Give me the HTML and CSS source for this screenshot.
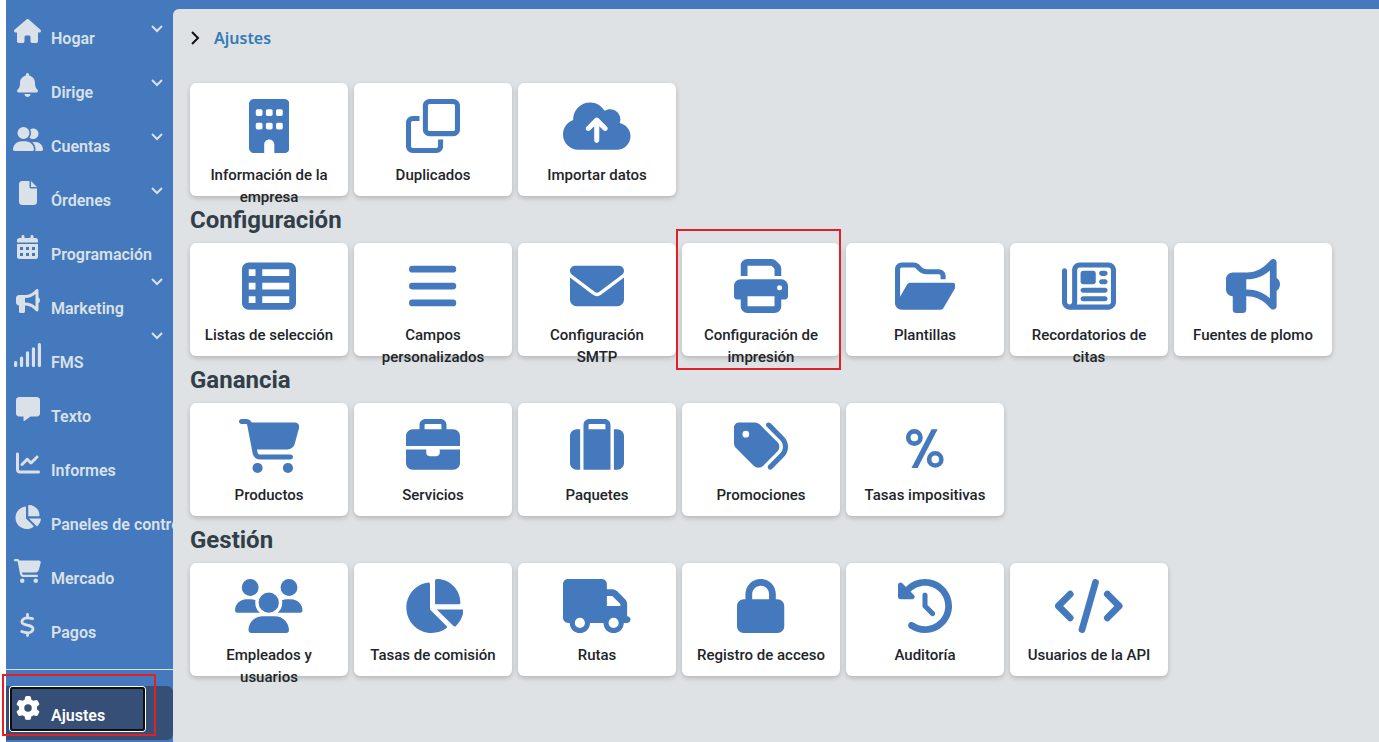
FILE: index.html
```html
<!DOCTYPE html>
<html lang="es">
<head>
    <meta charset="UTF-8">
    <meta name="viewport" content="width=device-width, initial-scale=1.0">
    <title>Ajustes</title>
    <link rel="stylesheet" href="styles.css">
</head>
<body>
    <div class="app">
        <!-- Sidebar -->
        <nav class="sidebar">
            <ul class="nav-list">
                <li><a href="#" class="nav-item">
                    <span class="nav-icon"><svg viewBox="0 0 576 512"><path d="M575.8 255.5c0 18-15 32.1-32 32.1h-32l.7 160.2V472c0 22.1-17.9 40-40 40H392c-22.1 0-40-17.9-40-40V384c0-17.7-14.3-32-32-32H256c-17.7 0-32 14.3-32 32v88c0 22.1-17.9 40-40 40H104c-22.1 0-40-17.9-40-40V287.6H32c-18 0-32-14-32-32.1c0-9 3-17 10-24L266.4 8c7-7 15-8 22-8s15 2 21 7L564.8 231.5c8 7 12 15 11 24z"/></svg></span>
                    <span class="nav-label">Hogar</span>
                    <svg class="chevron" viewBox="0 0 12 8"><path d="M1 1l5 5 5-5"/></svg>
                </a></li>
                <li><a href="#" class="nav-item">
                    <span class="nav-icon"><svg viewBox="0 0 448 512"><path d="M224 0c-17.7 0-32 14.3-32 32V51.2C119 66 64 130.6 64 208v18.8c0 47-17.3 92.4-48.5 127.6l-7.4 8.3c-8.4 9.4-10.4 22.9-5.3 34.4S19.4 416 32 416H416c12.6 0 24-7.4 29.2-18.9s3.1-25-5.3-34.4l-7.4-8.3C401.3 319.2 384 273.9 384 226.8V208c0-77.4-55-142-128-156.8V32c0-17.7-14.3-32-32-32zm45.3 493.3c12-12 18.7-28.3 18.7-45.3H160c0 17 6.7 33.3 18.7 45.3s28.3 18.7 45.3 18.7s33.3-6.7 45.3-18.7z"/></svg></span>
                    <span class="nav-label">Dirige</span>
                    <svg class="chevron" viewBox="0 0 12 8"><path d="M1 1l5 5 5-5"/></svg>
                </a></li>
                <li><a href="#" class="nav-item">
                    <span class="nav-icon"><svg viewBox="0 0 640 512"><path d="M96 128a128 128 0 1 1 256 0A128 128 0 1 1 96 128zM0 482.3C0 383.8 79.8 304 178.3 304h91.4C368.2 304 448 383.8 448 482.3c0 16.4-13.3 29.7-29.7 29.7H29.7C13.3 512 0 498.7 0 482.3zM609.3 512H471.4c5.4-9.4 8.6-20.3 8.6-32v-8c0-60.7-27.1-115.2-69.8-151.8c2.4-.1 4.7-.2 7.1-.2h61.4C567.8 320 640 392.2 640 481.3c0 17-13.8 30.7-30.7 30.7zM432 256c-31 0-59-12.6-79.3-32.9C372.4 196.5 384 163.6 384 128c0-26.8-6.6-52.1-18.3-74.3C384.3 40.1 407.2 32 432 32c61.9 0 112 50.1 112 112s-50.1 112-112 112z"/></svg></span>
                    <span class="nav-label">Cuentas</span>
                    <svg class="chevron" viewBox="0 0 12 8"><path d="M1 1l5 5 5-5"/></svg>
                </a></li>
                <li><a href="#" class="nav-item">
                    <span class="nav-icon"><svg viewBox="0 0 384 512"><path d="M0 64C0 28.7 28.7 0 64 0H224V128c0 17.7 14.3 32 32 32H384V448c0 35.3-28.7 64-64 64H64c-35.3 0-64-28.7-64-64V64zm384 64H256V0L384 128z"/></svg></span>
                    <span class="nav-label">Órdenes</span>
                    <svg class="chevron" viewBox="0 0 12 8"><path d="M1 1l5 5 5-5"/></svg>
                </a></li>
                <li><a href="#" class="nav-item">
                    <span class="nav-icon"><svg viewBox="0 0 448 512"><path fill-rule="evenodd" d="M128 0c17.7 0 32 14.3 32 32V64H288V32c0-17.7 14.3-32 32-32s32 14.3 32 32V64h48c26.5 0 48 21.5 48 48v48H0V112C0 85.5 21.5 64 48 64H96V32c0-17.7 14.3-32 32-32zM0 192H448V464c0 26.5-21.5 48-48 48H48c-26.5 0-48-21.5-48-48V192zM64 256v64h64v-64zM192 256v64h64v-64zM320 256v64h64v-64zM64 384v64h64v-64zM192 384v64h64v-64zM320 384v64h64v-64z"/></svg></span>
                    <span class="nav-label">Programación</span>
                </a></li>
                <li><a href="#" class="nav-item">
                    <span class="nav-icon"><svg viewBox="0 0 512 512"><path d="M480 32c0-12.9-7.8-24.6-19.8-29.6s-25.7-2.2-34.9 6.9L381.7 53c-48 48-113.1 75-181 75H64c-35.3 0-64 28.7-64 64v96c0 35.3 28.7 64 64 64V480c0 17.7 14.3 32 32 32h64c17.7 0 32-14.3 32-32V352h8.7c67.9 0 133 27 181 75l43.6 43.6c9.2 9.2 22.9 11.9 34.9 6.9s19.8-16.6 19.8-29.6V300.4c18.6-8.8 32-32.5 32-60.4s-13.4-51.6-32-60.4V32zm-64 76.7V371.3C357.2 317.8 280.5 288 200.7 288H192V192h8.7c79.8 0 156.5-29.8 215.3-83.3z"/></svg></span>
                    <span class="nav-label">Marketing</span>
                    <svg class="chevron chevron-top" viewBox="0 0 12 8"><path d="M1 1l5 5 5-5"/></svg>
                </a></li>
                <li><a href="#" class="nav-item">
                    <span class="nav-icon"><svg viewBox="0 0 576 512"><rect x="0" y="384" width="68" height="128" rx="32"/><rect x="127" y="288" width="68" height="224" rx="32"/><rect x="254" y="176" width="68" height="336" rx="32"/><rect x="381" y="88" width="68" height="424" rx="32"/><rect x="508" y="0" width="68" height="512" rx="32"/></svg></span>
                    <span class="nav-label">FMS</span>
                    <svg class="chevron chevron-top" viewBox="0 0 12 8"><path d="M1 1l5 5 5-5"/></svg>
                </a></li>
                <li><a href="#" class="nav-item">
                    <span class="nav-icon"><svg viewBox="0 0 512 512"><path d="M64 0C28.7 0 0 28.7 0 64V352c0 35.3 28.7 64 64 64h96v80c0 6.1 3.4 11.6 8.8 14.3s11.9 2.1 16.8-1.5L309.3 416H448c35.3 0 64-28.7 64-64V64c0-35.3-28.7-64-64-64H64z"/></svg></span>
                    <span class="nav-label">Texto</span>
                </a></li>
                <li><a href="#" class="nav-item">
                    <span class="nav-icon"><svg viewBox="0 0 512 512"><path d="M64 64c0-17.7-14.3-32-32-32S0 46.3 0 64V400c0 44.2 35.8 80 80 80H480c17.7 0 32-14.3 32-32s-14.3-32-32-32H80c-8.8 0-16-7.2-16-16V64zm406.6 86.6c12.5-12.5 12.5-32.8 0-45.3s-32.8-12.5-45.3 0L320 210.7l-57.4-57.4c-12.5-12.5-32.8-12.5-45.3 0l-112 112c-12.5 12.5-12.5 32.8 0 45.3s32.8 12.5 45.3 0L240 221.3l57.4 57.4c12.5 12.5 32.8 12.5 45.3 0l128-128z"/></svg></span>
                    <span class="nav-label">Informes</span>
                </a></li>
                <li><a href="#" class="nav-item">
                    <span class="nav-icon"><svg viewBox="0 0 576 512"><path d="M304 240V16.6c0-9 7-16.6 16-16.6C443.7 0 544 100.3 544 224c0 9-7.6 16-16.6 16H304zM32 272C32 150.7 122.1 50.3 239 34.3c9.2-1.3 17 6.1 17 15.4V288L412.5 444.5c6.7 6.7 6.2 17.7-1.5 23.1C371.8 495.6 323.8 512 272 512C139.5 512 32 404.6 32 272zm526.4 16c9.3 0 16.6 7.8 15.4 17c-7.7 55.9-34.6 105.6-73.9 142.3c-6 5.6-15.4 5.2-21.2-.7L320 288H558.4z"/></svg></span>
                    <span class="nav-label">Paneles de control</span>
                </a></li>
                <li><a href="#" class="nav-item">
                    <span class="nav-icon"><svg viewBox="0 0 576 512"><path d="M0 24C0 10.7 10.7 0 24 0H69.5c22 0 41.5 12.8 50.6 32h411c26.3 0 45.5 25 38.6 50.4l-41 152.3c-8.5 31.4-37 53.3-69.5 53.3H170.7l5.4 28.5c2.2 11.3 12.1 19.5 23.6 19.5H488c13.3 0 24 10.7 24 24s-10.7 24-24 24H199.7c-34.6 0-64.3-24.6-70.7-58.5L77.4 54.5c-.7-3.8-4-6.5-7.9-6.5H24C10.7 48 0 37.3 0 24zM128 464a48 48 0 1 1 96 0 48 48 0 1 1 -96 0zm336-48a48 48 0 1 1 0 96 48 48 0 1 1 0-96z"/></svg></span>
                    <span class="nav-label">Mercado</span>
                </a></li>
                <li><a href="#" class="nav-item">
                    <span class="nav-icon"><svg class="line-icon" viewBox="0 0 320 512"><path d="M160 32v60M160 420v60M268 122c-62-16-106-26-152-12c-62 18-88 64-66 104c34 56 186 38 220 100c20 40-6 86-60 102c-56 14-116 2-172-20"/></svg></span>
                    <span class="nav-label">Pagos</span>
                </a></li>
            </ul>
            <div class="nav-footer">
                <div class="nav-active">
                    <a href="#" class="nav-item nav-focus">
                        <span class="nav-icon"><svg viewBox="0 0 512 512"><path d="M495.9 166.6c3.2 8.7 .5 18.4-6.4 24.6l-43.3 39.4c1.1 8.3 1.7 16.8 1.7 25.4s-.6 17.1-1.7 25.4l43.3 39.4c6.9 6.2 9.6 15.9 6.4 24.6c-4.4 11.9-9.7 23.3-15.8 34.3l-4.7 8.1c-6.6 11-14 21.4-22.1 31.2c-5.9 7.2-15.7 9.6-24.5 6.8l-55.7-17.7c-13.4 10.3-28.2 18.9-44 25.4l-12.5 57.1c-2 9.1-9 16.3-18.2 17.8c-13.8 2.3-28 3.5-42.5 3.5s-28.7-1.2-42.5-3.5c-9.2-1.5-16.2-8.7-18.2-17.8l-12.5-57.1c-15.8-6.5-30.6-15.1-44-25.4L83.1 425.9c-8.8 2.8-18.6 .3-24.5-6.8c-8.1-9.8-15.5-20.2-22.1-31.2l-4.7-8.1c-6.1-11-11.4-22.4-15.8-34.3c-3.2-8.7-.5-18.4 6.4-24.6l43.3-39.4C64.6 273.1 64 264.6 64 256s.6-17.1 1.7-25.4L22.4 191.2c-6.9-6.2-9.6-15.9-6.4-24.6c4.4-11.9 9.7-23.3 15.8-34.3l4.7-8.1c6.6-11 14-21.4 22.1-31.2c5.9-7.2 15.7-9.6 24.5-6.8l55.7 17.7c13.4-10.3 28.2-18.9 44-25.4l12.5-57.1c2-9.1 9-16.3 18.2-17.8C227.3 1.2 241.5 0 256 0s28.7 1.2 42.5 3.5c9.2 1.5 16.2 8.7 18.2 17.8l12.5 57.1c15.8 6.5 30.6 15.1 44 25.4l55.7-17.7c8.8-2.8 18.6-.3 24.5 6.8c8.1 9.8 15.5 20.2 22.1 31.2l4.7 8.1c6.1 11 11.4 22.4 15.8 34.3zM256 336a80 80 0 1 0 0-160 80 80 0 1 0 0 160z"/></svg></span>
                        <span class="nav-label">Ajustes</span>
                    </a>
                </div>
            </div>
        </nav>

        <!-- Settings page -->
        <main class="content">
            <div class="breadcrumb">
                <svg class="breadcrumb-arrow" viewBox="0 0 10 14"><path d="M2 1l6 6-6 6"/></svg>
                <a href="#">Ajustes</a>
            </div>

            <section class="card-grid">
                <a href="#" class="card">
                    <svg viewBox="0 0 384 512"><path fill-rule="evenodd" d="M48 0C21.5 0 0 21.5 0 48V464c0 26.5 21.5 48 48 48h96V432c0-26.5 21.5-48 48-48s48 21.5 48 48v80h96c26.5 0 48-21.5 48-48V48c0-26.5-21.5-48-48-48H48zM80 96h32q16 0 16 16v32q0 16-16 16H80q-16 0-16-16v-32q0-16 16-16zM176 96h32q16 0 16 16v32q0 16-16 16h-32q-16 0-16-16v-32q0-16 16-16zM272 96h32q16 0 16 16v32q0 16-16 16h-32q-16 0-16-16v-32q0-16 16-16zM80 224h32q16 0 16 16v32q0 16-16 16H80q-16 0-16-16v-32q0-16 16-16zM176 224h32q16 0 16 16v32q0 16-16 16h-32q-16 0-16-16v-32q0-16 16-16zM272 224h32q16 0 16 16v32q0 16-16 16h-32q-16 0-16-16v-32q0-16 16-16z"/></svg>
                    <span class="card-label">Información de la empresa</span>
                </a>
                <a href="#" class="card">
                    <svg viewBox="0 0 512 512"><path fill-rule="evenodd" d="M224 0H448c35.3 0 64 28.7 64 64V288c0 35.3-28.7 64-64 64H224c-35.3 0-64-28.7-64-64V64c0-35.3 28.7-64 64-64zm0 48c-8.8 0-16 7.2-16 16V288c0 8.8 7.2 16 16 16H448c8.8 0 16-7.2 16-16V64c0-8.8-7.2-16-16-16H224zM64 160c-35.3 0-64 28.7-64 64V448c0 35.3 28.7 64 64 64H288c35.3 0 64-28.7 64-64V384H304v64c0 8.8-7.2 16-16 16H64c-8.8 0-16-7.2-16-16V224c0-8.8 7.2-16 16-16h64V160H64z"/></svg>
                    <span class="card-label">Duplicados</span>
                </a>
                <a href="#" class="card">
                    <svg viewBox="0 0 640 512"><path d="M144 480C64.5 480 0 415.5 0 336c0-62.8 40.2-116.2 96.2-135.9c-.1-2.7-.2-5.4-.2-8.1c0-88.4 71.6-160 160-160c59.3 0 111 32.2 138.7 80.2C409.9 102 428.3 96 448 96c53 0 96 43 96 96c0 12.2-2.3 23.8-6.4 34.6C596 238.4 640 290.1 640 352c0 70.7-57.3 128-128 128H144zm79-217c-9.4 9.4-9.4 24.6 0 33.9s24.6 9.4 33.9 0l39-39V392c0 13.3 10.7 24 24 24s24-10.7 24-24V257.9l39 39c9.4 9.4 24.6 9.4 33.9 0s9.4-24.6 0-33.9l-80-80c-9.4-9.4-24.6-9.4-33.9 0l-80 80z"/></svg>
                    <span class="card-label">Importar datos</span>
                </a>
            </section>

            <h2>Configuración</h2>
            <section class="card-grid">
                <a href="#" class="card">
                    <svg viewBox="0 0 512 512"><path fill-rule="evenodd" d="M64 32H448c35.3 0 64 28.7 64 64V416c0 35.3-28.7 64-64 64H64c-35.3 0-64-28.7-64-64V96c0-35.3 28.7-64 64-64zM64 96v64h64V96zM192 96v64H448V96zM64 224v64h64v-64zM192 224v64H448v-64zM64 352v64h64v-64zM192 352v64H448v-64z"/></svg>
                    <span class="card-label">Listas de selección</span>
                </a>
                <a href="#" class="card">
                    <svg class="line-icon" viewBox="0 0 448 512"><path d="M32 96H416M32 256H416M32 416H416"/></svg>
                    <span class="card-label">Campos personalizados</span>
                </a>
                <a href="#" class="card">
                    <svg viewBox="0 0 512 512"><path d="M48 64C21.5 64 0 85.5 0 112c0 15.1 7.1 29.3 19.2 38.4L236.8 313.6c11.4 8.5 27 8.5 38.4 0L492.8 150.4c12.1-9.1 19.2-23.3 19.2-38.4c0-26.5-21.5-48-48-48H48zM0 176V384c0 35.3 28.7 64 64 64H448c35.3 0 64-28.7 64-64V176L294.4 339.2c-22.8 17.1-54 17.1-76.8 0L0 176z"/></svg>
                    <span class="card-label">Configuración SMTP</span>
                </a>
                <a href="#" class="card card-marked">
                    <svg viewBox="0 0 512 512"><path fill-rule="evenodd" d="M128 0C92.7 0 64 28.7 64 64v96h64V64H354.7L384 93.3V160h64V93.3c0-17-6.7-33.3-18.7-45.3L400 18.7C388 6.7 371.7 0 354.7 0H128zM384 352v96H128V352H384zm64 32h32c17.7 0 32-14.3 32-32V256c0-35.3-28.7-64-64-64H64c-35.3 0-64 28.7-64 64v96c0 17.7 14.3 32 32 32H64v64c0 35.3 28.7 64 64 64H384c35.3 0 64-28.7 64-64V384zM432 248a24 24 0 1 1 0 48 24 24 0 1 1 0-48z"/></svg>
                    <span class="card-label">Configuración de impresión</span>
                </a>
                <a href="#" class="card">
                    <svg viewBox="0 0 576 512"><path d="M384 480h48c11.4 0 21.9-6 27.6-15.9l112-192c5.8-9.9 5.8-22.1 .1-32.1S555.5 224 544 224H144c-11.4 0-21.9 6-27.6 15.9L48 357.1V96c0-8.8 7.2-16 16-16H181.5c4.2 0 8.3 1.7 11.3 4.7l26.5 26.5c21 21 49.5 32.8 79.2 32.8H416c8.8 0 16 7.2 16 16v32h48V160c0-35.3-28.7-64-64-64H298.5c-17 0-33.3-6.7-45.3-18.7L226.7 50.7c-12-12-28.3-18.7-45.3-18.7H64C28.7 32 0 60.7 0 96V416c0 35.3 28.7 64 64 64H384z"/></svg>
                    <span class="card-label">Plantillas</span>
                </a>
                <a href="#" class="card">
                    <svg viewBox="0 0 512 512"><path fill-rule="evenodd" d="M168 80c-13.3 0-24 10.7-24 24V408c0 8.4-1.4 16.5-4.1 24H440c13.3 0 24-10.7 24-24V104c0-13.3-10.7-24-24-24H168zM72 480c-39.8 0-72-32.2-72-72V112C0 98.7 10.7 88 24 88s24 10.7 24 24V408c0 13.3 10.7 24 24 24s24-10.7 24-24V104c0-39.8 32.2-72 72-72H440c39.8 0 72 32.2 72 72V408c0 39.8-32.2 72-72 72H72zM176 136c0-13.3 10.7-24 24-24h96c13.3 0 24 10.7 24 24v80c0 13.3-10.7 24-24 24H200c-13.3 0-24-10.7-24-24V136zm200-24h32c13.3 0 24 10.7 24 24s-10.7 24-24 24H376c-13.3 0-24-10.7-24-24s10.7-24 24-24zm0 80h32c13.3 0 24 10.7 24 24s-10.7 24-24 24H376c-13.3 0-24-10.7-24-24s10.7-24 24-24zM200 272H408c13.3 0 24 10.7 24 24s-10.7 24-24 24H200c-13.3 0-24-10.7-24-24s10.7-24 24-24zm0 80H408c13.3 0 24 10.7 24 24s-10.7 24-24 24H200c-13.3 0-24-10.7-24-24s10.7-24 24-24z"/></svg>
                    <span class="card-label">Recordatorios de citas</span>
                </a>
                <a href="#" class="card">
                    <svg viewBox="0 0 512 512"><path d="M480 32c0-12.9-7.8-24.6-19.8-29.6s-25.7-2.2-34.9 6.9L381.7 53c-48 48-113.1 75-181 75H64c-35.3 0-64 28.7-64 64v96c0 35.3 28.7 64 64 64V480c0 17.7 14.3 32 32 32h64c17.7 0 32-14.3 32-32V352h8.7c67.9 0 133 27 181 75l43.6 43.6c9.2 9.2 22.9 11.9 34.9 6.9s19.8-16.6 19.8-29.6V300.4c18.6-8.8 32-32.5 32-60.4s-13.4-51.6-32-60.4V32zm-64 76.7V371.3C357.2 317.8 280.5 288 200.7 288H192V192h8.7c79.8 0 156.5-29.8 215.3-83.3z"/></svg>
                    <span class="card-label">Fuentes de plomo</span>
                </a>
            </section>

            <h2>Ganancia</h2>
            <section class="card-grid">
                <a href="#" class="card">
                    <svg viewBox="0 0 576 512"><path d="M0 24C0 10.7 10.7 0 24 0H69.5c22 0 41.5 12.8 50.6 32h411c26.3 0 45.5 25 38.6 50.4l-41 152.3c-8.5 31.4-37 53.3-69.5 53.3H170.7l5.4 28.5c2.2 11.3 12.1 19.5 23.6 19.5H488c13.3 0 24 10.7 24 24s-10.7 24-24 24H199.7c-34.6 0-64.3-24.6-70.7-58.5L77.4 54.5c-.7-3.8-4-6.5-7.9-6.5H24C10.7 48 0 37.3 0 24zM128 464a48 48 0 1 1 96 0 48 48 0 1 1 -96 0zm336-48a48 48 0 1 1 0 96 48 48 0 1 1 0-96z"/></svg>
                    <span class="card-label">Productos</span>
                </a>
                <a href="#" class="card">
                    <svg viewBox="0 0 512 512"><path fill-rule="evenodd" d="M184 48H328c4.4 0 8 3.6 8 8V96H176V56c0-4.4 3.6-8 8-8zm-56 8V96H64C28.7 96 0 124.7 0 160v96H512V160c0-35.3-28.7-64-64-64H384V56c0-30.9-25.1-56-56-56H184c-30.9 0-56 25.1-56 56zM512 288H320v32c0 17.7-14.3 32-32 32H224c-17.7 0-32-14.3-32-32V288H0V416c0 35.3 28.7 64 64 64H448c35.3 0 64-28.7 64-64V288z"/></svg>
                    <span class="card-label">Servicios</span>
                </a>
                <a href="#" class="card">
                    <svg viewBox="0 0 512 512"><path fill-rule="evenodd" d="M176 56V96H336V56c0-4.4-3.6-8-8-8H184c-4.4 0-8 3.6-8 8zM128 96V56c0-30.9 25.1-56 56-56H328c30.9 0 56 25.1 56 56V480H128V96zM64 96H96V480H64c-35.3 0-64-28.7-64-64V160c0-35.3 28.7-64 64-64zM448 480H416V96h32c35.3 0 64 28.7 64 64V416c0 35.3-28.7 64-64 64z"/></svg>
                    <span class="card-label">Paquetes</span>
                </a>
                <a href="#" class="card">
                    <svg viewBox="0 0 512 512"><path d="M345 39.1L472.8 168.4c52.4 53 52.4 138.2 0 191.2L360.8 472.9c-9.3 9.4-24.5 9.5-33.9 .2s-9.5-24.5-.2-33.9L438.6 325.9c33.9-34.3 33.9-89.4 0-123.7L310.9 72.9c-9.3-9.4-9.2-24.6 .2-33.9s24.6-9.2 33.9 .2zM0 229.5V80C0 53.5 21.5 32 48 32H197.5c17 0 33.3 6.7 45.3 18.7l168 168c25 25 25 65.5 0 90.5L277.3 442.7c-25 25-65.5 25-90.5 0l-168-168C6.7 262.7 0 246.5 0 229.5zM144 144a32 32 0 1 0 -64 0 32 32 0 1 0 64 0z"/></svg>
                    <span class="card-label">Promociones</span>
                </a>
                <a href="#" class="card">
                    <svg class="percent-icon" viewBox="0 0 512 512"><circle cx="155" cy="175" r="58"/><circle cx="353" cy="383" r="58"/><path class="slash" d="M318 98h58L186 464h-58z"/></svg>
                    <span class="card-label">Tasas impositivas</span>
                </a>
            </section>

            <h2>Gestión</h2>
            <section class="card-grid">
                <a href="#" class="card">
                    <svg viewBox="0 0 640 512"><path d="M144 0a80 80 0 1 1 0 160A80 80 0 1 1 144 0zM512 0a80 80 0 1 1 0 160A80 80 0 1 1 512 0zM0 298.7C0 239.8 47.8 192 106.7 192h42.7c15.9 0 31 3.5 44.6 9.7c-1.3 7.2-1.9 14.7-1.9 22.3c0 38.2 16.8 72.5 43.3 96H21.3C9.6 320 0 310.4 0 298.7zM404.6 320c26.6-23.5 43.3-57.8 43.3-96c0-7.6-.7-15-1.9-22.3c13.6-6.3 28.7-9.7 44.6-9.7h42.7C592.2 192 640 239.8 640 298.7c0 11.8-9.6 21.3-21.3 21.3H404.6zM224 224a96 96 0 1 1 192 0 96 96 0 1 1 -192 0zM128 485.3C128 411.7 187.7 352 261.3 352H378.7C452.3 352 512 411.7 512 485.3c0 14.7-11.9 26.7-26.7 26.7H154.7c-14.7 0-26.7-11.9-26.7-26.7z"/></svg>
                    <span class="card-label">Empleados y usuarios</span>
                </a>
                <a href="#" class="card">
                    <svg viewBox="0 0 576 512"><path d="M304 240V16.6c0-9 7-16.6 16-16.6C443.7 0 544 100.3 544 224c0 9-7.6 16-16.6 16H304zM32 272C32 150.7 122.1 50.3 239 34.3c9.2-1.3 17 6.1 17 15.4V288L412.5 444.5c6.7 6.7 6.2 17.7-1.5 23.1C371.8 495.6 323.8 512 272 512C139.5 512 32 404.6 32 272zm526.4 16c9.3 0 16.6 7.8 15.4 17c-7.7 55.9-34.6 105.6-73.9 142.3c-6 5.6-15.4 5.2-21.2-.7L320 288H558.4z"/></svg>
                    <span class="card-label">Tasas de comisión</span>
                </a>
                <a href="#" class="card">
                    <svg viewBox="0 0 640 512"><path fill-rule="evenodd" d="M48 0C21.5 0 0 21.5 0 48V368c0 26.5 21.5 48 48 48H64c0 53 43 96 96 96s96-43 96-96H384c0 53 43 96 96 96s96-43 96-96h32c17.7 0 32-14.3 32-32s-14.3-32-32-32V237.3c0-17-6.7-33.3-18.7-45.3L512 114.7c-12-12-28.3-18.7-45.3-18.7H416V48c0-26.5-21.5-48-48-48H48zM416 160h50.7L544 237.3V256H416V160zM112 416a48 48 0 1 1 96 0 48 48 0 1 1 -96 0zm368-48a48 48 0 1 1 0 96 48 48 0 1 1 0-96z"/></svg>
                    <span class="card-label">Rutas</span>
                </a>
                <a href="#" class="card">
                    <svg viewBox="0 0 448 512"><path fill-rule="evenodd" d="M144 144v48H304V144c0-44.2-35.8-80-80-80s-80 35.8-80 80zM80 192V144C80 64.5 144.5 0 224 0s144 64.5 144 144v48h16c35.3 0 64 28.7 64 64V448c0 35.3-28.7 64-64 64H64c-35.3 0-64-28.7-64-64V256c0-35.3 28.7-64 64-64H80z"/></svg>
                    <span class="card-label">Registro de acceso</span>
                </a>
                <a href="#" class="card">
                    <svg viewBox="0 0 512 512"><path d="M75 75L41 41C25.9 25.9 0 36.6 0 57.9V168c0 13.3 10.7 24 24 24H134.1c21.4 0 32.1-25.9 17-41l-30.8-30.8C155 85.5 203 64 256 64c106 0 192 86 192 192s-86 192-192 192c-40.8 0-78.6-12.7-109.7-34.4c-14.5-10.1-34.4-6.6-44.6 7.9s-6.6 34.4 7.9 44.6C151.2 495 201.7 512 256 512c141.4 0 256-114.6 256-256S397.4 0 256 0C185.3 0 121.3 28.7 75 75zm181 53c-13.3 0-24 10.7-24 24V256c0 6.4 2.5 12.5 7 17l72 72c9.4 9.4 24.6 9.4 33.9 0s9.4-24.6 0-33.9l-65-65V152c0-13.3-10.7-24-24-24z"/></svg>
                    <span class="card-label">Auditoría</span>
                </a>
                <a href="#" class="card">
                    <svg class="line-icon" viewBox="0 0 640 512"><path d="M384 32L256 480M144 144L32 256L144 368M496 144L608 256L496 368"/></svg>
                    <span class="card-label">Usuarios de la API</span>
                </a>
            </section>
        </main>
    </div>
</body>
</html>
```
FILE: styles.css
```css
* {
    box-sizing: border-box;
}

body {
    margin: 0;
    padding-left: 6px;
    background-color: #fff;
    font-family: Roboto, "Liberation Sans", sans-serif;
    color: #212529;
}

a {
    color: inherit;
    text-decoration: none;
}

.app {
    display: flex;
    min-height: 100vh;
    background-color: #4479bd;
}

/* Sidebar */
.sidebar {
    flex: 0 0 167px;
    min-width: 0;
    padding-top: 4px;
    color: #dbe1e8;
}

.nav-list {
    list-style: none;
    margin: 0;
    padding: 0 0 17px;
    border-bottom: 1px solid #dbe1e8;
}

.nav-item {
    display: flex;
    align-items: center;
    height: 54px;
}

.nav-icon {
    flex: 0 0 43px;
    display: flex;
    justify-content: center;
}

.nav-icon svg {
    height: 24px;
    fill: currentColor;
}

.nav-label {
    flex: 1;
    min-width: 0;
    padding: 16px 0 0 2px;
    font-size: 16px;
    line-height: 24px;
    font-weight: 600;
    white-space: nowrap;
    overflow: hidden;
}

.chevron {
    flex: none;
    width: 12px;
    height: 8px;
    margin: 0 10px 4px 0;
    fill: none;
    stroke: currentColor;
    stroke-width: 2;
}

.chevron-top {
    align-self: flex-start;
    margin-top: 4px;
}

.nav-footer {
    padding-top: 16px;
}

.nav-active {
    position: relative;
    height: 54px;
    padding: 1px 0 0 4px;
    background-color: #364f77;
    border-radius: 0 6px 6px 0;
}

.nav-focus {
    width: 135px;
    height: 44px;
    padding-bottom: 2px;
    border-radius: 3px;
    color: #fff;
    outline: 2px solid #101010;
    outline-offset: -2px;
    box-shadow: 0 0 0 1px #fff;
}

.nav-focus .nav-icon {
    flex-basis: 35px;
}

.nav-focus .nav-label {
    padding-left: 6px;
}

/* Red callout frames */
.nav-active::after,
.card-marked::after {
    content: "";
    position: absolute;
    border: 2px solid #e02226;
    pointer-events: none;
}

.nav-active::after {
    inset: -12px 17px 4px -4px;
}

.card-marked::after {
    inset: -14px -1px -14px -6px;
}

/* Content */
.content {
    flex: 1;
    min-width: 0;
    margin-top: 9px;
    padding: 15px 17px 16px;
    background-color: #dee2e5;
    border-radius: 6px 0 0 0;
}

.breadcrumb {
    display: flex;
    align-items: center;
    height: 28px;
    margin-bottom: 31px;
    font-family: "Noto Sans", sans-serif;
    font-size: 16px;
    font-weight: 600;
    color: #337ab7;
}

.breadcrumb-arrow {
    width: 10px;
    height: 14px;
    margin-right: 14px;
    fill: none;
    stroke: #111;
    stroke-width: 2;
}

h2 {
    margin: 0;
    padding-top: 1px;
    font-size: 24px;
    line-height: 46px;
    font-weight: 700;
    color: #333f48;
}

.card-grid {
    display: grid;
    grid-template-columns: repeat(auto-fill, 158px);
    gap: 6px;
}

.card {
    position: relative;
    display: flex;
    flex-direction: column;
    align-items: center;
    gap: 11px;
    height: 113px;
    padding: 16px 10px 0;
    background-color: #fff;
    border-radius: 6px;
    box-shadow: 0 2px 5px rgba(0, 0, 0, 0.2);
}

.card svg {
    flex: none;
    height: 54px;
    fill: #4479bd;
}

.card-label {
    font-size: 15px;
    line-height: 22px;
    font-weight: 500;
    text-align: center;
}

/* Icons drawn with strokes */
.nav-icon .line-icon {
    fill: none;
    stroke: currentColor;
    stroke-width: 60;
    stroke-linecap: round;
}

.card .line-icon {
    fill: none;
    stroke: #4479bd;
    stroke-width: 64;
    stroke-linecap: round;
    stroke-linejoin: round;
}

.card .percent-icon {
    fill: none;
    stroke: #4479bd;
    stroke-width: 44;
}

.percent-icon .slash {
    fill: #4479bd;
    stroke: none;
}
```
